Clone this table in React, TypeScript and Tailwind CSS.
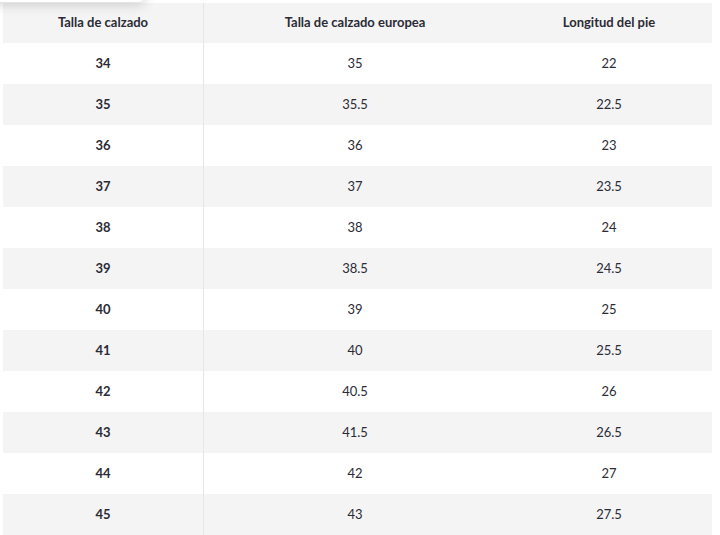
const rows = [
  ["34", "35", "22"],
  ["35", "35.5", "22.5"],
  ["36", "36", "23"],
  ["37", "37", "23.5"],
  ["38", "38", "24"],
  ["39", "38.5", "24.5"],
  ["40", "39", "25"],
  ["41", "40", "25.5"],
  ["42", "40.5", "26"],
  ["43", "41.5", "26.5"],
  ["44", "42", "27"],
  ["45", "43", "27.5"],
];

export default function App() {
  return (
    <div className="relative h-[535px] w-[720px] overflow-hidden bg-white font-['Lato',sans-serif] text-[13px] text-[#2b2b36]">
      {/* floating card edge peeking in from above */}
      <div className="absolute -left-4 -top-10 z-10 h-[42px] w-[162px] rounded-br-lg bg-white shadow-[0_3px_12px_rgba(0,0,0,0.16)]" />

      <div className="ml-[3px] mt-[3px] w-[709px]">
        <div className="grid h-10 grid-cols-[201px_302px_206px] items-center bg-[#f4f4f4] font-bold">
          <div className="flex h-full items-center justify-center border-r border-[#e6e6e6]">Talla de calzado</div>
          <div className="text-center">Talla de calzado europea</div>
          <div className="text-center">Longitud del pie</div>
        </div>
        {rows.map((r, i) => (
          <div
            key={r[0]}
            className={`grid h-[41px] grid-cols-[201px_302px_206px] items-center ${i % 2 === 1 ? "bg-[#f4f4f4]" : "bg-white"}`}
          >
            <div className="flex h-full items-center justify-center border-r border-[#e6e6e6] font-bold">{r[0]}</div>
            <div className="text-center">{r[1]}</div>
            <div className="text-center">{r[2]}</div>
          </div>
        ))}
      </div>
    </div>
  );
}
